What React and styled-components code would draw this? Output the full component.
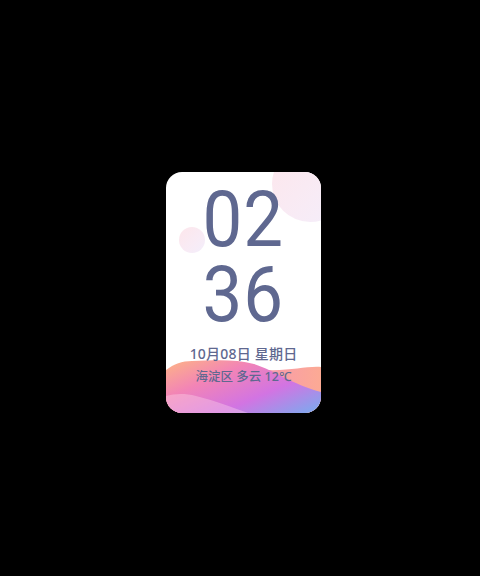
import styled, { createGlobalStyle } from "styled-components";

const GlobalStyle = createGlobalStyle`
  html, body {
    margin: 0;
    padding: 0;
    background: #000000;
  }
`;

const Page = styled.div`
  width: 480px;
  height: 576px;
  box-sizing: border-box;
  padding: 172px 0 0 166px;
  background: #000000;
`;

const Card = styled.div`
  position: relative;
  width: 155px;
  height: 241px;
  border-radius: 16px;
  overflow: hidden;
  background: #ffffff;
`;

const Bubble = styled.div`
  position: absolute;
  left: ${props => props.x - props.r}px;
  top: ${props => props.y - props.r}px;
  width: ${props => props.r * 2}px;
  height: ${props => props.r * 2}px;
  border-radius: 50%;
  background: linear-gradient(135deg, #fde6eb 0%, #f8ebf5 60%, #f3eefb 100%);
`;

const Waves = styled.svg`
  position: absolute;
  left: 0;
  bottom: 0;
  width: 155px;
  height: 60px;
`;

const Content = styled.div`
  position: relative;
  display: flex;
  flex-direction: column;
  align-items: center;
  padding-top: 11px;
  color: #5f6890;
`;

const Digits = styled.div`
  height: 75px;
  font-family: Roboto, "Noto Sans", sans-serif;
  font-size: 77px;
  font-weight: 400;
  line-height: 75px;
  letter-spacing: 1px;
  transform: scaleX(0.92);
`;

const DateLine = styled.div`
  margin-top: 12px;
  font-family: "Noto Sans", "Noto Sans CJK SC", sans-serif;
  font-size: 14px;
  font-weight: 500;
  line-height: 18px;
  letter-spacing: 0.2px;
  white-space: pre;
`;

const Weather = styled.div`
  margin-top: 5px;
  font-family: "Noto Sans", "Noto Sans CJK SC", sans-serif;
  font-size: 12.5px;
  font-weight: 500;
  line-height: 18px;
  white-space: pre;
`;

const App = () => {
    return (
        <Page>
            <GlobalStyle/>
            <Card>
                <Bubble x={144} y={12} r={38}/>
                <Bubble x={26} y={68} r={13}/>
                <Waves viewBox="0 181 155 60" preserveAspectRatio="none">
                    <defs>
                        <linearGradient id="back" x1="0" y1="0" x2="1" y2="0">
                            <stop offset="0" stopColor="#fbb093"/>
                            <stop offset="0.5" stopColor="#f693b6"/>
                            <stop offset="1" stopColor="#fcaa94"/>
                        </linearGradient>
                        <linearGradient id="front" x1="0" y1="0.1" x2="1" y2="0.9">
                            <stop offset="0" stopColor="#fcae8b"/>
                            <stop offset="0.3" stopColor="#f284b6"/>
                            <stop offset="0.65" stopColor="#d274e2"/>
                            <stop offset="1" stopColor="#82a6ee"/>
                        </linearGradient>
                    </defs>
                    <path d="M0,200 C30,190 70,196 100,198 C125,199 140,194 155,195 L155,241 L0,241 Z"
                          fill="url(#back)"/>
                    <path d="M0,198 C8,192 16,189 26,189 C50,188 70,187 88,192 C110,199 125,212 155,220 L155,241 L0,241 Z"
                          fill="url(#front)"/>
                    <path d="M0,224 C8,222 18,221 30,224 C50,229 68,236 82,241 L0,241 Z"
                          fill="#ffe0ee" opacity="0.35"/>
                </Waves>
                <Content>
                    <Digits>02</Digits>
                    <Digits>36</Digits>
                    <DateLine>10月08日 星期日</DateLine>
                    <Weather>海淀区 多云 12℃</Weather>
                </Content>
            </Card>
        </Page>
    );
};

export default App;
